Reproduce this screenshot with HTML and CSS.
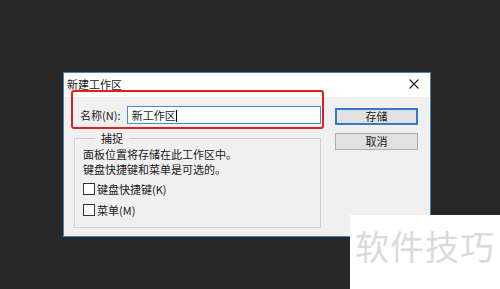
FILE: index.html
```html
<!DOCTYPE html>
<html lang="zh-CN">
<head>
<meta charset="UTF-8">
<title>新建工作区</title>
<link rel="stylesheet" href="styles.css">
</head>
<body>

<div class="dialog">
    <div class="titlebar">
        <span class="title">新建工作区</span>
        <svg class="close" width="10" height="10" viewBox="0 0 10 10">
            <path d="M0.5 0.5 L9.5 9.5 M9.5 0.5 L0.5 9.5" stroke="#222" stroke-width="1.1" fill="none"/>
        </svg>
    </div>
    <div class="body">
        <div class="main">
            <div class="name-row">
                <label for="name">名称(N):</label>
                <div class="input" id="name">新工作区<span class="caret"></span></div>
            </div>
            <fieldset class="group">
                <legend>捕捉</legend>
                <p>面板位置将存储在此工作区中。<br>键盘快捷键和菜单是可选的。</p>
                <div class="check"><span class="box"></span>键盘快捷键(K)</div>
                <div class="check"><span class="box"></span>菜单(M)</div>
            </fieldset>
        </div>
        <div class="buttons">
            <button class="btn default">存储</button>
            <button class="btn">取消</button>
        </div>
    </div>
    <div class="highlight"></div>
</div>

<div class="watermark">软件技巧</div>

</body>
</html>
```

FILE: styles.css
```css
body {
    margin: 0;
    width: 500px;
    height: 289px;
    background-color: #282828;
    font-family: "Noto Sans CJK SC", "Noto Sans", sans-serif;
    font-size: 11px;
    color: #1a1a1a;
    overflow: hidden;
    position: relative;
}

.dialog {
    position: absolute;
    left: 63px;
    top: 72px;
    width: 366px;
    height: 163px;
    border: 1px solid #3f84bd;
    background: #f0f0f0;
    display: flex;
    flex-direction: column;
}

.titlebar {
    height: 24px;
    background: #fff;
    display: flex;
    align-items: center;
    justify-content: space-between;
    padding: 0 11px 0 3px;
}

.title {
    line-height: 14px;
    margin-top: -2px;
}

.close {
    margin-top: -2px;
}

.body {
    display: flex;
    padding: 9px 0 0 10px;
}

.main {
    width: 247px;
}

.name-row {
    display: flex;
    align-items: center;
    height: 18px;
    padding-left: 6px;
}

.name-row label {
    width: 47px;
}

.input {
    width: 189px;
    height: 16px;
    line-height: 16px;
    border: 1px solid #4a8cc9;
    background: #fff;
    padding-left: 4px;
}

.caret {
    display: inline-block;
    width: 1px;
    height: 12px;
    background: #000;
    vertical-align: -2px;
}

.group {
    margin: 8px 0 0;
    padding: 3px 8px 0;
    height: 96px;
    border: 1px solid #d0d0d0;
    border-radius: 0;
    box-sizing: border-box;
}

.group legend {
    margin-left: 12px;
    padding: 0 6px;
    line-height: 12px;
}

.group p {
    margin: 0;
    line-height: 15px;
}

.check {
    display: flex;
    align-items: center;
    height: 15px;
    margin-top: 4px;
}

.check + .check {
    margin-top: 6px;
}

.box {
    width: 10px;
    height: 10px;
    border: 1px solid #333;
    background: #fff;
    margin-right: 2px;
}

.buttons {
    display: flex;
    flex-direction: column;
    margin-left: 14px;
    padding-top: 2px;
}

.btn {
    width: 83px;
    height: 17px;
    padding: 0;
    font-family: inherit;
    font-size: 11px;
    line-height: 13px;
    background: #e1e1e1;
    border: 1px solid #adadad;
    color: #1a1a1a;
    margin-bottom: 8px;
}

.btn.default {
    border: 2px solid #2f7bc4;
}

.highlight {
    position: absolute;
    left: 7px;
    top: 17px;
    width: 249px;
    height: 35px;
    border: 2px solid #e0201c;
    border-radius: 3px;
}

.watermark {
    position: absolute;
    left: 350px;
    top: 215px;
    width: 150px;
    height: 74px;
    background: #fff;
    color: #dadada;
    font-size: 34px;
    line-height: 62px;
    padding-left: 5px;
    box-sizing: border-box;
    letter-spacing: 1px;
}
```
